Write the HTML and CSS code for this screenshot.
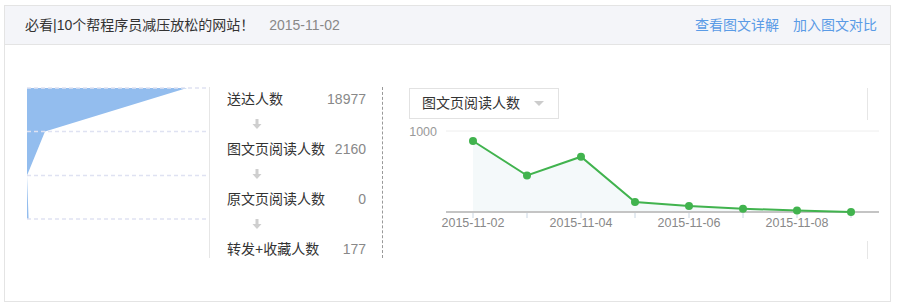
FILE: index.html
```html
<!DOCTYPE html>
<html lang="zh-CN">
<head>
    <meta charset="UTF-8">
    <title>图文分析</title>
    <link rel="stylesheet" href="styles.css">
</head>
<body>
    <div class="card">
        <div class="card-head">
            <span class="title">必看|10个帮程序员减压放松的网站！</span>
            <span class="date">2015-11-02</span>
            <div class="links">
                <a href="#">查看图文详解</a>
                <a href="#">加入图文对比</a>
            </div>
        </div>

        <div class="card-body">
            <div class="funnel">
                <svg width="182" height="171" viewBox="0 0 182 171">
                    <polygon points="0,1 160,1 18,44.5 0,88.5 1.6,132 0,132" fill="#93bdee"/>
                    <g stroke="#dfe2f2" stroke-width="1.5" stroke-dasharray="4 3">
                        <line x1="0" y1="1" x2="181" y2="1"/>
                        <line x1="0" y1="44.5" x2="181" y2="44.5"/>
                        <line x1="0" y1="88.5" x2="181" y2="88.5"/>
                        <line x1="0" y1="132" x2="181" y2="132"/>
                    </g>
                </svg>
            </div>

            <div class="steps">
                <div class="step"><span class="name">送达人数</span><span class="num">18977</span></div>
                <div class="arrow"><svg width="10" height="11" viewBox="0 0 10 11"><rect x="3.5" y="0" width="3" height="6" fill="#cfcfcf"/><polygon points="0.5,5 9.5,5 5,10" fill="#cfcfcf"/></svg></div>
                <div class="step"><span class="name">图文页阅读人数</span><span class="num">2160</span></div>
                <div class="arrow"><svg width="10" height="11" viewBox="0 0 10 11"><rect x="3.5" y="0" width="3" height="6" fill="#cfcfcf"/><polygon points="0.5,5 9.5,5 5,10" fill="#cfcfcf"/></svg></div>
                <div class="step"><span class="name">原文页阅读人数</span><span class="num">0</span></div>
                <div class="arrow"><svg width="10" height="11" viewBox="0 0 10 11"><rect x="3.5" y="0" width="3" height="6" fill="#cfcfcf"/><polygon points="0.5,5 9.5,5 5,10" fill="#cfcfcf"/></svg></div>
                <div class="step"><span class="name">转发+收藏人数</span><span class="num">177</span></div>
            </div>

            <div class="trend">
                <div class="trend-top">
                    <div class="select">
                        <span>图文页阅读人数</span>
                        <i class="caret"></i>
                    </div>
                </div>
                <svg class="plot" width="497" height="121" viewBox="0 0 497 121">
                    <text x="54" y="15.5" class="axis-val" text-anchor="end">1000</text>
                    <line x1="63" y1="11" x2="496" y2="11" stroke="#eeeeee" stroke-width="1"/>
                    <polygon points="90,21 144,55.5 198,36.7 252,82 306,86 360,88.7 414,90.5 468,92 468,92 90,92" fill="#f4f9fa"/>
                    <line x1="63" y1="92" x2="496" y2="92" stroke="#c4c4c4" stroke-width="2"/>
                    <g stroke="#c9d6e3" stroke-width="1">
                        <line x1="90" y1="93" x2="90" y2="98"/>
                        <line x1="144" y1="93" x2="144" y2="98"/>
                        <line x1="198" y1="93" x2="198" y2="98"/>
                        <line x1="252" y1="93" x2="252" y2="98"/>
                        <line x1="306" y1="93" x2="306" y2="98"/>
                        <line x1="360" y1="93" x2="360" y2="98"/>
                        <line x1="414" y1="93" x2="414" y2="98"/>
                        <line x1="468" y1="93" x2="468" y2="98"/>
                    </g>
                    <polyline points="90,21 144,55.5 198,36.7 252,82 306,86 360,88.7 414,90.5 468,92" fill="none" stroke="#41b34e" stroke-width="2"/>
                    <g fill="#41b34e">
                        <circle cx="90" cy="21" r="4"/>
                        <circle cx="144" cy="55.5" r="4"/>
                        <circle cx="198" cy="36.7" r="4"/>
                        <circle cx="252" cy="82" r="4"/>
                        <circle cx="306" cy="86" r="4"/>
                        <circle cx="360" cy="88.7" r="4"/>
                        <circle cx="414" cy="90.5" r="4"/>
                        <circle cx="468" cy="92" r="4"/>
                    </g>
                    <g class="axis-label" text-anchor="middle">
                        <text x="90" y="106.5">2015-11-02</text>
                        <text x="198" y="106.5">2015-11-04</text>
                        <text x="306" y="106.5">2015-11-06</text>
                        <text x="414" y="106.5">2015-11-08</text>
                    </g>
                </svg>
                <div class="trend-bottom"></div>
            </div>
        </div>
    </div>
</body>
</html>
```

FILE: styles.css
```css
body {
    margin: 0;
    padding: 5px 0 0 4px;
    font-family: "Liberation Sans", "Noto Sans CJK SC", sans-serif;
    font-size: 14px;
    color: #333;
    background: #fff;
}
.card {
    width: 887px;
    height: 297px;
    box-sizing: border-box;
    border: 1px solid #e4e4e4;
}
.card-head {
    display: flex;
    align-items: center;
    height: 38px;
    line-height: 38px;
    padding: 0 13px 0 20px;
    background-color: #f4f5f9;
    border-bottom: 1px solid #e4e4e4;
}
.title {
    color: #333;
}
.date {
    margin-left: 15px;
    color: #888;
}
.links {
    margin-left: auto;
    display: flex;
    gap: 14px;
}
.links a {
    color: #5a9be6;
    text-decoration: none;
}
.card-body {
    display: flex;
    align-items: flex-start;
    padding: 42px 0 0 22px;
}
.funnel {
    flex: none;
    width: 182px;
    height: 171px;
    border-right: 1px solid #e6e6e6;
}
.funnel svg {
    display: block;
}
.steps {
    flex: none;
    width: 139px;
    height: 171px;
    padding: 0 16px 0 17px;
    border-right: 1px dashed #999;
}
.step {
    display: flex;
    justify-content: space-between;
    height: 24px;
    line-height: 24px;
    white-space: nowrap;
}
.num {
    color: #888;
}
.arrow {
    height: 26px;
    padding-left: 25px;
    display: flex;
    align-items: center;
}
.arrow svg {
    display: block;
}
.trend {
    flex: none;
    width: 497px;
}
.trend-top {
    width: 458px;
    height: 32px;
    padding-left: 26px;
    border-right: 1px solid #e6e6e6;
}
.select {
    box-sizing: border-box;
    width: 150px;
    height: 31px;
    margin-top: 1px;
    padding: 0 12px;
    border: 1px solid #e2e2e2;
    display: flex;
    align-items: center;
    justify-content: space-between;
    line-height: 29px;
}
.caret {
    width: 0;
    height: 0;
    border-left: 5px solid transparent;
    border-right: 5px solid transparent;
    border-top: 5px solid #cccccc;
    margin-right: 2px;
}
.plot {
    display: block;
}
.axis-val {
    font-size: 12.5px;
    fill: #999;
}
.axis-label {
    font-size: 12.5px;
    fill: #888;
}
.trend-bottom {
    width: 484px;
    height: 18px;
    border-right: 1px solid #e6e6e6;
}
```
